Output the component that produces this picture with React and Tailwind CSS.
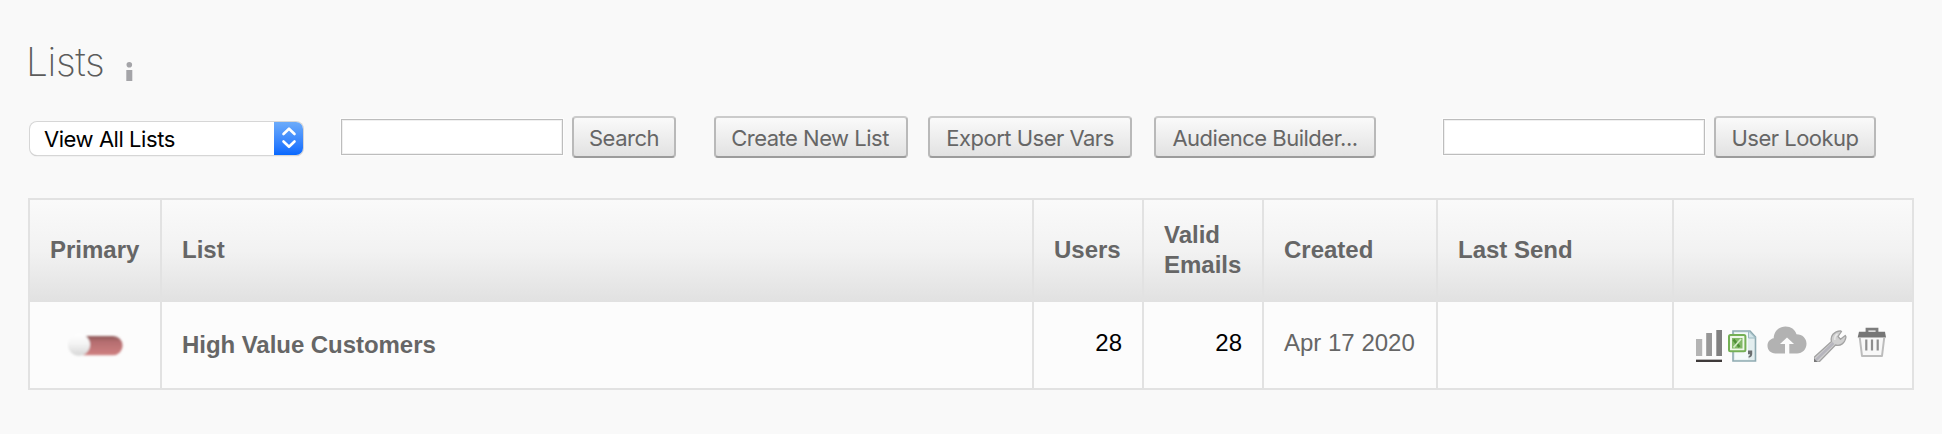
const ui = "font-['Inter','Noto_Sans',sans-serif]";

function ToolButton({ children, className }) {
  return (
    <button
      type="button"
      className={`flex h-[42px] shrink-0 items-center justify-center whitespace-nowrap rounded-[4px] border-2 border-x-[#b9b9b9] border-t-[#cbcbcb] border-b-[#9c9c9c] bg-linear-to-b from-[#fafafa] to-[#e2e2e2] pt-[2px] text-[#666] ${ui} text-[22px] leading-[26px] tracking-[-0.5px] ${className}`}
    >
      {children}
    </button>
  );
}

function TextField({ className }) {
  return (
    <input
      type="text"
      className={`h-9 shrink-0 border border-[#bdbdbd] bg-white shadow-[inset_0_0_0_1px_#f0f0f0,0_0_0_1px_#fdfdfd] ${className}`}
    />
  );
}

function InfoIcon() {
  return (
    <svg width="8" height="20" viewBox="0 0 8 20" fill="#a4a4a8">
      <circle cx="4.3" cy="2.8" r="2.8" />
      <rect x="1.3" y="8" width="6" height="11" />
    </svg>
  );
}

function ToggleOff() {
  return (
    <svg width="60" height="26" viewBox="0 0 60 26">
      <defs>
        <linearGradient id="track" x1="0" y1="0" x2="0" y2="1">
          <stop offset="0" stopColor="#8f5a5b" />
          <stop offset="0.3" stopColor="#b56e70" />
          <stop offset="1" stopColor="#cf8081" />
        </linearGradient>
        <linearGradient id="knob" x1="0" y1="0" x2="0" y2="1">
          <stop offset="0" stopColor="#ffffff" />
          <stop offset="0.45" stopColor="#f4f4f4" />
          <stop offset="1" stopColor="#d6d6d6" />
        </linearGradient>
        <filter id="soft" x="-10%" y="-10%" width="120%" height="120%">
          <feGaussianBlur stdDeviation="0.8" />
        </filter>
      </defs>
      <g filter="url(#soft)">
        <path d="M16 3H46a9.600 9.600 0 0 1 0 19.200H16Z" fill="url(#track)" />
        <circle cx="12" cy="11.800" r="11" fill="url(#knob)" />
      </g>
    </svg>
  );
}

function ChartIcon() {
  return (
    <svg className="mt-1" width="26" height="32" viewBox="0 0 26 32">
      <rect x="0" y="9" width="6.200" height="17" fill="#b4b4b4" />
      <rect x="10.200" y="3" width="5.800" height="23" fill="#979797" />
      <rect x="20.300" y="0" width="5.700" height="26" fill="#808080" />
      <rect x="0" y="30" width="26" height="2" fill="#3f3a3a" />
      <rect x="0" y="29" width="26" height="1" fill="#b5b3b3" />
    </svg>
  );
}

function CsvIcon() {
  return (
    <svg className="mt-1 ml-[6px]" width="29" height="32" viewBox="0 0 29 32">
      <path d="M5 1H22L27.500 7V31H5Z" fill="#e3eeef" stroke="#8eaab1" strokeWidth="1.600" />
      <path d="M7 3H20V29.500H7Z" fill="#f8fcfc" opacity=".8" />
      <path d="M20.500 1V8H27.500Z" fill="#d3e5e9" stroke="#9dbac2" strokeWidth="1" />
      <rect x="1" y="4.900" width="16.400" height="16.400" rx="1.500" fill="#eef7e8" stroke="#74b055" strokeWidth="2" />
      <rect x="4" y="8" width="10.500" height="10.500" fill="#82b968" />
      <path d="M5.500 9.500L11.500 17" stroke="#4f8f37" strokeWidth="2.600" />
      <path d="M13 9L5.500 17.500" stroke="#d3ebc6" strokeWidth="1.800" />
      <path d="M20 20.500h4.200v3.500q0 3-3.600 3.800v-1.600q1.400-.5 1.500-2H20Z" fill="#6b6f70" />
    </svg>
  );
}

function CloudIcon() {
  return (
    <svg className="ml-[10px]" width="40" height="30" viewBox="0 0 40 30">
      <path
        d="M8.500 27.500C3.500 27.500.5 24 .5 19.800C.5 15.800 3 13 6.700 12.300C7 5 12 .5 18.500 .5C24 .5 28 3.500 29.500 8.300C35.500 8.300 39.500 12.500 39.500 17.800C39.500 23.300 35.500 27.500 30 27.500H22.300V18H27L20 11.500L13 18H18V27.500Z"
        fill="#b2b2b2"
      />
    </svg>
  );
}

function WrenchIcon() {
  return (
    <svg className="mt-1 ml-[7px]" width="33" height="32" viewBox="0 0 33 32">
      <path
        d="M0 27.500L17.500 11.500C16 6 20 1.200 26.500 .8L27.500 1.500L24 6.500L26.500 9.300L31.300 5.500L32 7C31 13.500 26.500 16.200 21.500 15L5 32H0Z"
        fill="#d0d0d0"
        stroke="#a3a3a3"
        strokeWidth="1.300"
        strokeLinejoin="round"
      />
      <path d="M1.500 30.500L19.500 13" stroke="#b6b5bd" strokeWidth="2.600" />
      <path d="M0 32V28.500L3.500 32Z" fill="#777" />
      <path d="M20.800 10Q20.300 6 23.500 4" stroke="#e8e8e8" strokeWidth="1.500" fill="none" />
    </svg>
  );
}

function TrashIcon() {
  return (
    <svg className="ml-[10px]" width="30" height="32" viewBox="0 0 30 32">
      <path d="M10 6V3.200H20V6" fill="none" stroke="#7d7d7d" strokeWidth="2.800" />
      <path d="M2 5.800H28L29 11.500H.7Z" fill="#767676" />
      <path d="M2.800 12L5 30H25L27.200 12" fill="#f8f8f8" stroke="#bcbcbc" strokeWidth="2" strokeLinejoin="round" />
      <path d="M9.300 13.500V24.500M15 13.500V24.500M20.700 13.500V24.500" stroke="#8e8e8e" strokeWidth="2.200" />
    </svg>
  );
}

const cols = 'grid grid-cols-[132px_872px_110px_120px_174px_236px_240px]';
const cell = 'border-l-2 border-[#e2e2e2] pl-5';
const headCell = `${cell} flex items-center pb-[2px]`;

export default function App() {
  return (
    <div className="flex h-[434px] w-[1942px] flex-col overflow-hidden bg-[#f9f9f9] pl-7 font-['Liberation_Sans',Arial,sans-serif] text-[24px] leading-[30px] text-[#666]">
      <header className="flex h-[116px] shrink-0 items-start">
        <h1 className="mt-[37px] -ml-[2px] w-[99px] font-['Inter','Roboto',sans-serif] text-[39px] leading-[50px] font-extralight tracking-[-0.4px] text-[#5c5c5c]">
          Lists
        </h1>
        <div className="mt-[62px]">
          <InfoIcon />
        </div>
      </header>

      <div className="flex h-[42px] shrink-0 items-center">
        <div className="mt-[2px] ml-[2px] flex h-[33px] w-[273px] shrink-0 overflow-hidden rounded-[7px] bg-white shadow-[0_0_0_1px_#d6d6d6,0_1px_1px_#aaa]">
          <span className={`flex-1 pl-[14px] ${ui} text-[22px] leading-[34px] tracking-[-0.45px] whitespace-nowrap text-black`}>
            View All Lists
          </span>
          <span className="flex w-[29px] items-center justify-center bg-linear-to-b from-[#6cabfa] to-[#0668fe]">
            <svg width="16" height="24" viewBox="0 0 16 24" fill="none" stroke="#fff" strokeWidth="2.600" strokeLinecap="round" strokeLinejoin="round">
              <path d="M2.500 8L8 2.700L13.500 8M2.500 15.500L8 20.800L13.500 15.500" />
            </svg>
          </span>
        </div>
        <TextField className="ml-[38px] w-[222px]" />
        <ToolButton className="ml-[9px] w-[104px]">Search</ToolButton>
        <ToolButton className="ml-[38px] w-[194px] pr-[2px]">Create New List</ToolButton>
        <ToolButton className="ml-5 w-[204px]">Export User Vars</ToolButton>
        <ToolButton className="ml-[22px] w-[222px]">Audience Builder...</ToolButton>
        <TextField className="ml-[67px] w-[262px]" />
        <ToolButton className="ml-[9px] w-[162px]">User Lookup</ToolButton>
      </div>

      <section className="mt-10 flex h-[192px] w-[1886px] shrink-0 flex-col border-y-2 border-r-2 border-[#e2e2e2]">
        <div className={`${cols} h-[102px] bg-linear-to-b from-[#fafafa] via-[#f2f2f2] to-[#e1e1e1] font-bold`}>
          <div className={headCell}>Primary</div>
          <div className={headCell}>List</div>
          <div className={headCell}>Users</div>
          <div className={headCell}>
            Valid
            <br />
            Emails
          </div>
          <div className={headCell}>Created</div>
          <div className={headCell}>Last Send</div>
          <div className={cell} />
        </div>
        <div className={`${cols} h-[86px] bg-[#fcfcfc]`}>
          <div className={`${cell} pt-[31px] pl-[37px]`}>
            <ToggleOff />
          </div>
          <div className={`${cell} pt-[28px] font-bold tracking-[-0.05px]`}>High Value Customers</div>
          <div className={`${cell} pt-[26px] pr-5 text-right text-black`}>28</div>
          <div className={`${cell} pt-[26px] pr-5 text-right text-black`}>28</div>
          <div className={`${cell} pt-[26px]`}>Apr 17 2020</div>
          <div className={cell} />
          <div className="flex items-start border-l-2 border-[#e2e2e2] pt-6 pl-[22px]">
            <ChartIcon />
            <CsvIcon />
            <CloudIcon />
            <WrenchIcon />
            <TrashIcon />
          </div>
        </div>
      </section>
    </div>
  );
}
